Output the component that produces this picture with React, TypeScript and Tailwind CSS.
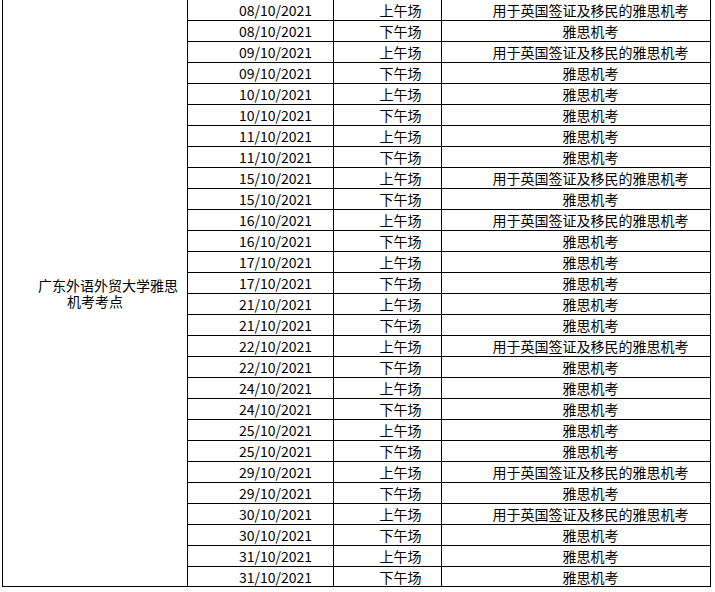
const rows: [string, string, string][] = [
  ["08/10/2021", "上午场", "用于英国签证及移民的雅思机考"],
  ["08/10/2021", "下午场", "雅思机考"],
  ["09/10/2021", "上午场", "用于英国签证及移民的雅思机考"],
  ["09/10/2021", "下午场", "雅思机考"],
  ["10/10/2021", "上午场", "雅思机考"],
  ["10/10/2021", "下午场", "雅思机考"],
  ["11/10/2021", "上午场", "雅思机考"],
  ["11/10/2021", "下午场", "雅思机考"],
  ["15/10/2021", "上午场", "用于英国签证及移民的雅思机考"],
  ["15/10/2021", "下午场", "雅思机考"],
  ["16/10/2021", "上午场", "用于英国签证及移民的雅思机考"],
  ["16/10/2021", "下午场", "雅思机考"],
  ["17/10/2021", "上午场", "雅思机考"],
  ["17/10/2021", "下午场", "雅思机考"],
  ["21/10/2021", "上午场", "雅思机考"],
  ["21/10/2021", "下午场", "雅思机考"],
  ["22/10/2021", "上午场", "用于英国签证及移民的雅思机考"],
  ["22/10/2021", "下午场", "雅思机考"],
  ["24/10/2021", "上午场", "雅思机考"],
  ["24/10/2021", "下午场", "雅思机考"],
  ["25/10/2021", "上午场", "雅思机考"],
  ["25/10/2021", "下午场", "雅思机考"],
  ["29/10/2021", "上午场", "用于英国签证及移民的雅思机考"],
  ["29/10/2021", "下午场", "雅思机考"],
  ["30/10/2021", "上午场", "用于英国签证及移民的雅思机考"],
  ["30/10/2021", "下午场", "雅思机考"],
  ["31/10/2021", "上午场", "雅思机考"],
  ["31/10/2021", "下午场", "雅思机考"],
];

const App = () => {
  return (
    <div className="min-h-screen bg-white font-['Noto_Sans_CJK_SC',sans-serif] text-[14px] text-black">
      <div className="ml-[2px] flex w-[709px] border-x border-b border-black">
        {/* Merged venue cell */}
        <div className="flex w-[185px] shrink-0 flex-col justify-center border-r border-black leading-[16px]">
          <div className="pl-[26px] text-center">广东外语外贸大学雅思</div>
          <div className="text-center">机考考点</div>
        </div>

        {/* Session rows */}
        <div className="flex flex-1 flex-col">
          {rows.map(([date, session, type], i) => {
            const last = i === rows.length - 1;
            return (
              <div
                key={i}
                className={
                  last
                    ? "flex h-[19px] leading-none"
                    : "flex h-[21px] border-b border-black leading-none"
                }
              >
                <div className="flex w-[146px] items-center justify-center border-r border-black pl-[30px]">
                  {date}
                </div>
                <div className="flex w-[108px] items-center justify-center border-r border-black pl-[26px]">
                  {session}
                </div>
                <div className="flex flex-1 items-center justify-center pl-[29px]">
                  {type}
                </div>
              </div>
            );
          })}
        </div>
      </div>
    </div>
  );
};

export default App;
